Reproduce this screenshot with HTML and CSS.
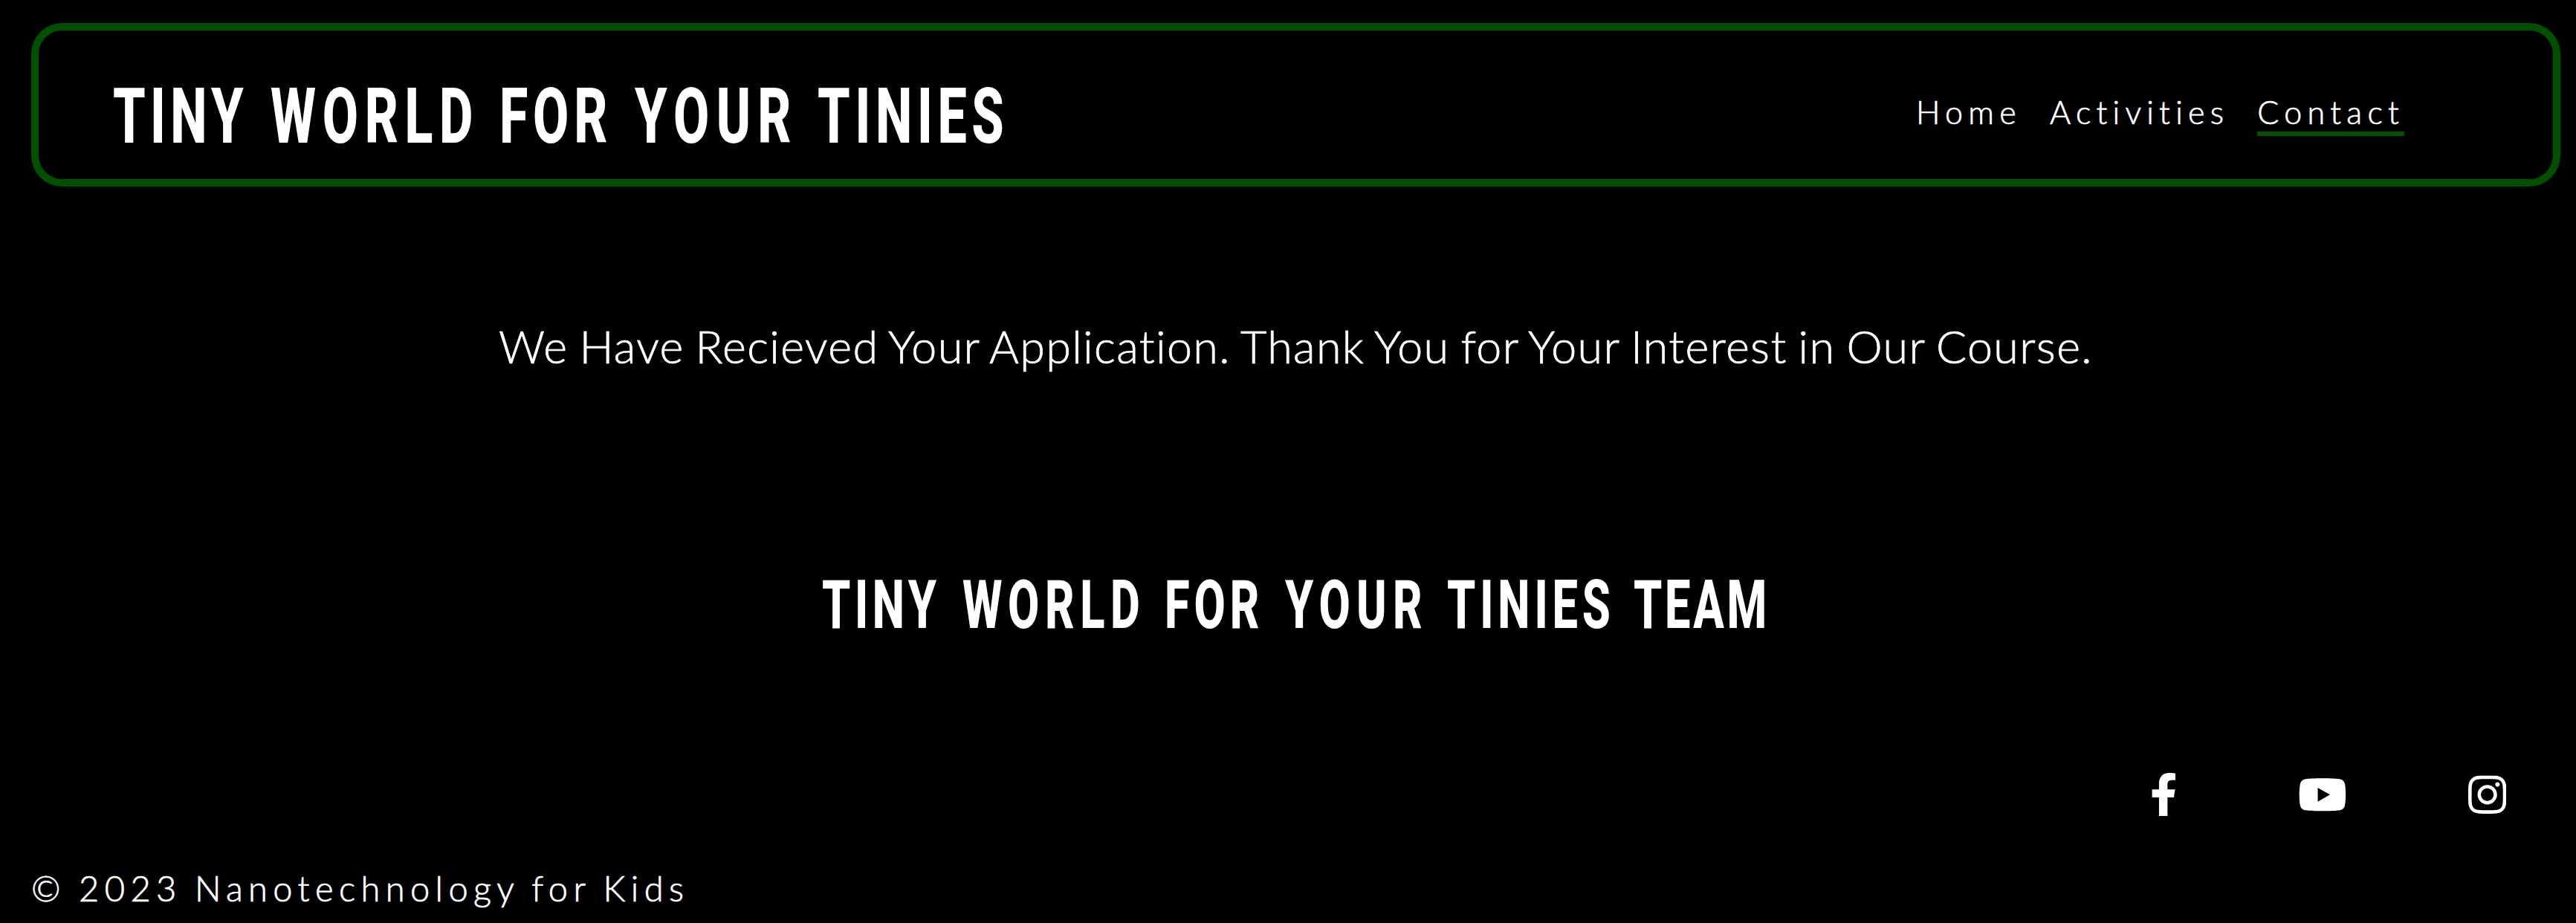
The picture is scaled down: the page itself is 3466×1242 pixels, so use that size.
FILE: index.html
```html
<!DOCTYPE html>
<html lang="en">
<head>
<meta charset="utf-8">
<title>Tiny World for Your Tinies</title>
<link rel="stylesheet" href="styles.css">
</head>
<body>
<header class="header">
<h1 class="title logo"><span class="tiny">TINY</span> <span class="world">WORLD</span> <span class="for">FOR</span> <span class="your">YOUR</span> <span class="tinies">TINIES</span></h1>
<nav class="nav"><a>Home</a><a>Activities</a><a class="active">Contact</a></nav>
</header>
<main>
<p class="message">We Have Recieved Your Application. Thank You for Your Interest in Our Course.</p>
<h2 class="title team"><span class="tiny">TINY</span> <span class="world">WORLD</span> <span class="for">FOR</span> <span class="your">YOUR</span> <span class="tinies">TINIES</span> <span class="crew">TEAM</span></h2>
</main>
<footer>
<div class="social">
<svg class="fb" viewBox="0 0 320 512"><path d="M279.14 288l14.22-92.66h-88.91v-60.13c0-25.35 12.42-50.06 52.24-50.06h40.42V6.26S260.43 0 225.36 0c-73.22 0-121.08 44.38-121.08 124.72v70.62H22.89V288h81.39v224h100.17V288z"/></svg>
<svg class="yt" viewBox="0 0 576 512"><path d="M549.655 124.083c-6.281-23.65-24.787-42.276-48.284-48.597C458.781 64 288 64 288 64S117.22 64 74.629 75.486c-23.497 6.322-42.003 24.947-48.284 48.597-11.412 42.867-11.412 132.305-11.412 132.305s0 89.438 11.412 132.305c6.281 23.65 24.787 41.5 48.284 47.821C117.22 448 288 448 288 448s170.78 0 213.371-11.486c23.497-6.321 42.003-24.171 48.284-47.821 11.412-42.867 11.412-132.305 11.412-132.305s0-89.438-11.412-132.305zm-317.51 213.508V175.185l142.739 81.205-142.739 81.201z"/></svg>
<svg class="ig" viewBox="0 0 448 512"><path d="M224.1 141c-63.6 0-114.9 51.3-114.9 114.9s51.3 114.9 114.9 114.9S339 319.5 339 255.9 287.7 141 224.1 141zm0 189.6c-41.1 0-74.7-33.5-74.7-74.7s33.5-74.7 74.7-74.7 74.7 33.5 74.7 74.7-33.6 74.7-74.7 74.7zm146.4-194.3c0 14.9-12 26.8-26.8 26.8-14.9 0-26.8-12-26.8-26.8s12-26.8 26.8-26.8 26.8 12 26.8 26.8zm76.1 27.2c-1.7-35.9-9.9-67.7-36.2-93.9-26.2-26.2-58-34.4-93.9-36.2-37-2.1-147.9-2.1-184.9 0-35.8 1.7-67.6 9.9-93.9 36.1s-34.4 58-36.2 93.9c-2.1 37-2.1 147.9 0 184.9 1.7 35.9 9.9 67.7 36.2 93.9s58 34.4 93.9 36.2c37 2.1 147.9 2.1 184.9 0 35.9-1.7 67.7-9.9 93.9-36.2 26.2-26.2 34.4-58 36.2-93.9 2.1-37 2.1-147.8 0-184.8zM398.8 388c-7.8 19.6-22.9 34.7-42.6 42.6-29.5 11.7-99.5 9-132.1 9s-102.7 2.6-132.1-9c-19.6-7.8-34.7-22.9-42.6-42.6-11.7-29.5-9-99.5-9-132.1s-2.6-102.7 9-132.1c7.8-19.6 22.9-34.7 42.6-42.6 29.5-11.7 99.5-9 132.1-9s102.7-2.6 132.1 9c19.6 7.8 34.7 22.9 42.6 42.6 11.7 29.5 9 99.5 9 132.1s2.7 102.7-9 132.1z"/></svg>
</div>
<p class="copy">© 2023 Nanotechnology for Kids</p>
</footer>
</body>
</html>
```

FILE: styles.css
```css
* { box-sizing: border-box; margin: 0; padding: 0; }
body {
  background: #000; color: #fff;
  font-family: Lato, sans-serif; font-weight: 300;
  font-variant-ligatures: none;
  -webkit-text-stroke: .7px #fff;
  padding: 31px 21px 0 42px; height: 1242px; overflow: hidden;
}
.header {
  height: 220px; border: 10px solid #005000; border-radius: 42px;
  display: flex; justify-content: space-between; padding: 0 200px 0 100px;
}

/* Condensed headings: one grid column per word */
.title {
  display: grid; grid-template-columns: 2.058em 2.99em 1.767em 2.388em auto;
  font-family: Roboto, sans-serif; font-weight: 800; white-space: nowrap;
  -webkit-text-stroke: 0;
}
.title span { justify-self: start; transform: scaleX(.68); transform-origin: left; }
.tiny { letter-spacing: .09em; }
.world { letter-spacing: .123em; }
.for { letter-spacing: .096em; }
.your { letter-spacing: .133em; }
.tinies { letter-spacing: .095em; }
.crew { letter-spacing: .06em; }
.logo { font-size: 103px; line-height: 140px; padding-top: 46px; }
.team {
  grid-template-columns: 2.093em 3.02em 1.787em 2.414em 2.78em 2.036em;
  font-size: 90.3px; line-height: 120px; margin-top: 250px; justify-content: center;
}

.nav { display: flex; gap: 38px; padding-top: 84px; font-size: 43px; line-height: 52px; letter-spacing: 7.3px; }
.nav a { height: 58px; }
.nav .active { border-bottom: 6px solid #005000; }
.message { font-size: 61px; line-height: 76px; letter-spacing: 1.37px; word-spacing: -3px; text-align: center; margin-top: 177px; }
.social { display: flex; height: 64px; margin-top: 163px; justify-content: flex-end; align-items: center; padding-right: 73px; }
.social svg { fill: #fff; stroke: none; height: 58.6px; }
.fb { width: 36.6px; margin-right: 163px; }
.yt { width: 65.9px; margin-right: 162.5px; }
.ig { width: 51.3px; }
.copy { font-size: 47px; line-height: 58px; letter-spacing: 7.4px; word-spacing: -3px; margin-top: 65px; }
```
